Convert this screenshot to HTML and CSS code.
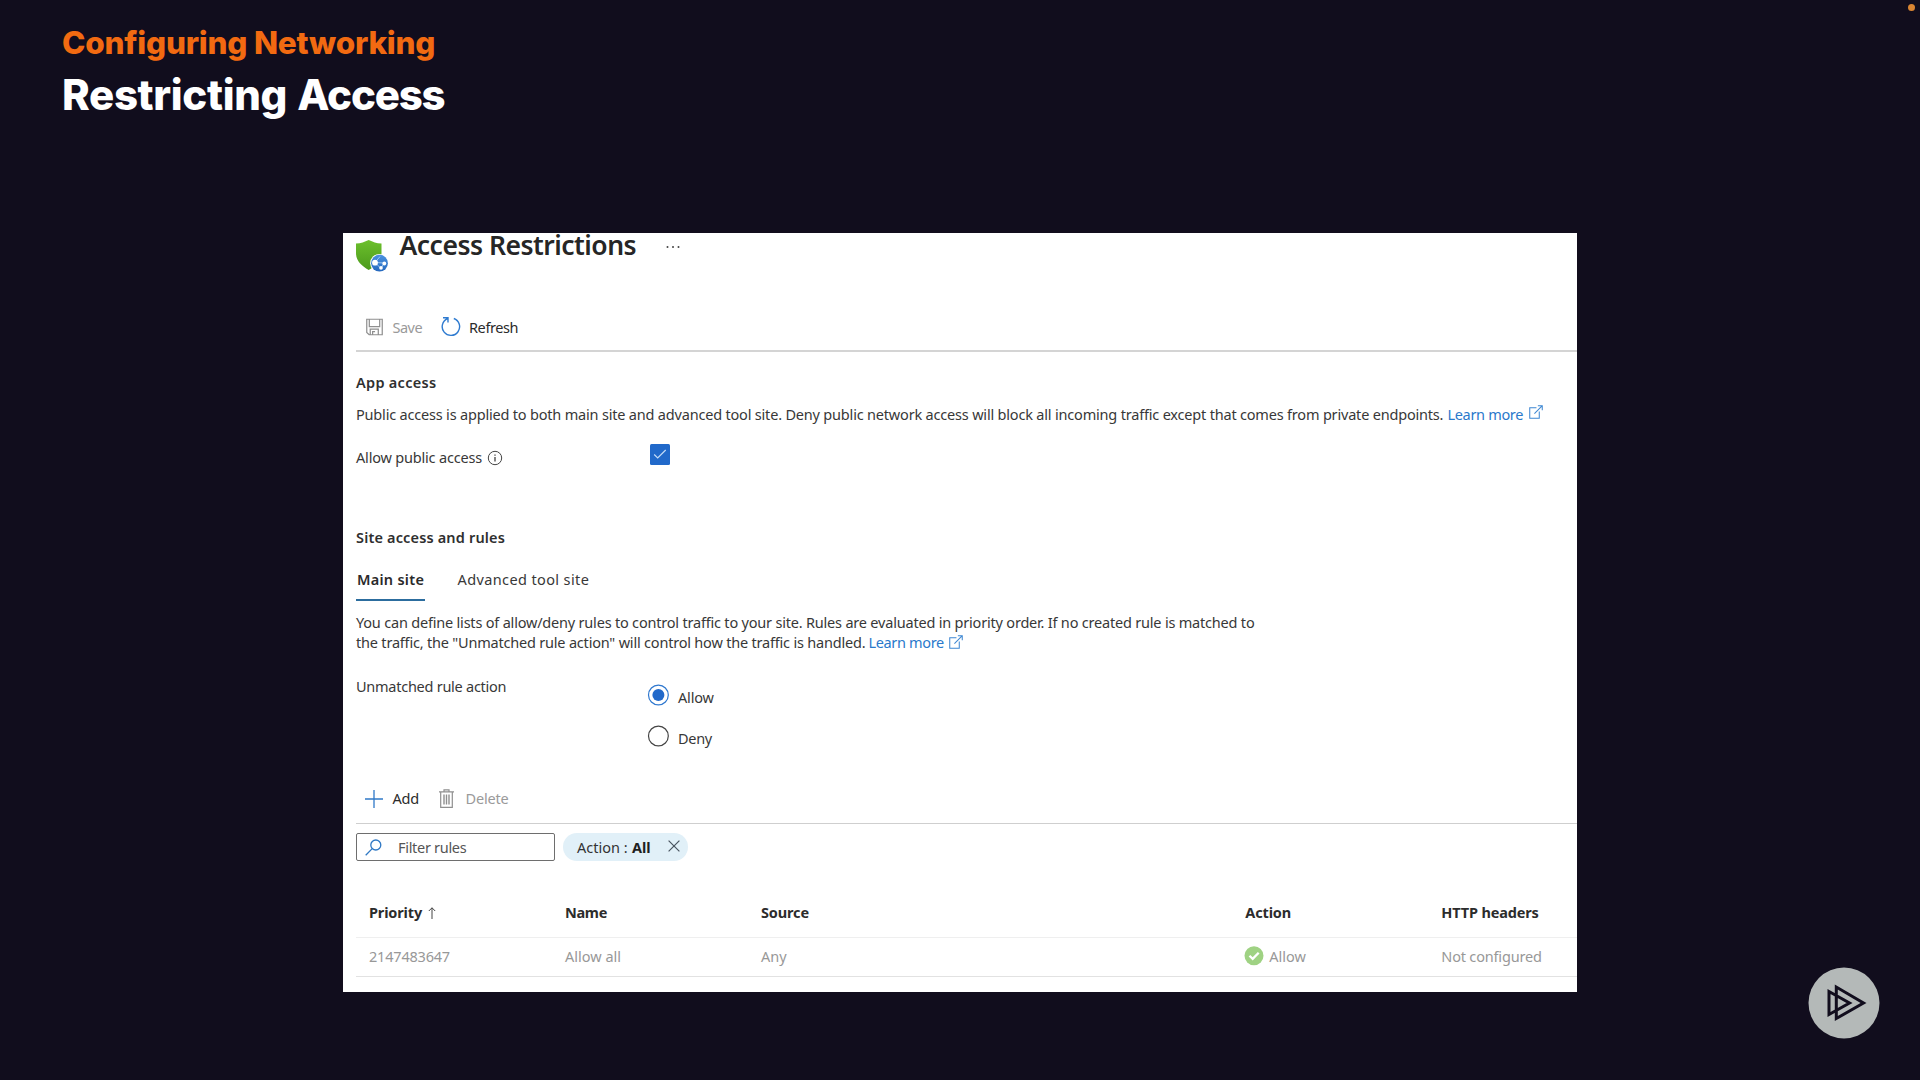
FILE: index.html
```html
<!DOCTYPE html>
<html lang="en">
<head>
<meta charset="utf-8">
<title>Restricting Access</title>
<link rel="stylesheet" href="styles.css">
</head>
<body>
<header class="slide-head">
  <p class="topic">Configuring Networking</p>
  <h1 class="slide-title">Restricting <span class="tight">Access</span></h1>
</header>
<span class="record-dot"></span>

<main class="panel">
  <div class="blade-head">
    <svg class="shield" width="34" height="34" viewBox="0 0 34 34">
      <defs>
        <linearGradient id="g" x1="0" y1="0" x2="0" y2="1"><stop offset="0" stop-color="#6cc02c"/><stop offset="1" stop-color="#4c9a1c"/></linearGradient>
        <linearGradient id="b" x1="0" y1="0" x2="0" y2="1"><stop offset="0" stop-color="#4b92e0"/><stop offset="1" stop-color="#2468bd"/></linearGradient>
      </defs>
      <path fill="url(#g)" d="M0 4.500C5 4.300 8.500 3 12.700 1c4.200 2 7.700 3.300 12.800 3.500V14c0 8-5.500 12.500-12.800 17C5.500 26.500 0 22 0 14z"/>
      <circle cx="23.500" cy="24.200" r="9.300" fill="#fff"/>
      <circle cx="23.500" cy="24.200" r="8.400" fill="url(#b)"/>
      <path d="M19 23.500l9 .5M19 23.500l6 6M28 24l-3 5.500M19 23.500l5-6" stroke="#9cc6f2" stroke-width="1"/>
      <circle cx="19" cy="23.700" r="2.900" fill="#fff"/><circle cx="28.300" cy="24.500" r="1.900" fill="#fff"/><circle cx="25" cy="28.900" r="1.800" fill="#fff"/>
    </svg>
    <h2 class="blade-title">Access Restrictions</h2>
    <svg class="more" width="14" height="4" viewBox="0 0 14 4" fill="#444"><circle cx="1.500" cy="2" r="1"/><circle cx="7" cy="2" r="1"/><circle cx="12.500" cy="2" r="1"/></svg>
  </div>

  <div class="toolbar">
    <svg class="i-save" width="17" height="18" viewBox="0 0 18 18" fill="none" stroke="#8f8f8f" stroke-width="1.300"><path d="M.8.8h16.400v16.400H3.300L.8 14.700zM3.500.8v7.700h11V.8M4.500 17v-5.700h8.500V17M7 17v-3h2.600"/></svg>
    <span class="muted t-save">Save</span>
    <svg class="i-refresh" width="20" height="21" viewBox="0 0 20 21" fill="none" stroke="#2f7bd0" stroke-width="1.400"><path d="M12.800 2.500A8.700 8.700 0 1 1 6.500 2.700M2 1.700h5v4.800"/></svg>
    <span class="strong t-refresh">Refresh</span>
  </div>

  <section class="app-access">
    <h3 class="section-title">App access</h3>
    <p class="intro"><span>Public access is applied to both main site and advanced tool site. Deny public network access will block all incoming traffic except that comes from private endpoints.</span><a class="link">Learn more</a><svg class="ext" width="14" height="14" viewBox="0 0 15 15" fill="none" stroke="#3c86d2" stroke-width="1.100"><path d="M8 3H.8v11.200H11V7M5.800 9.200L14 1M9.500.8h4.700v4.700"/></svg></p>
    <div class="public">
      <span class="public-label">Allow public access</span>
      <svg class="info" width="16" height="16" viewBox="0 0 16 16"><circle cx="8" cy="8" r="6.700" fill="none" stroke="#444" stroke-width="1"/><path d="M8 7v4.500M8 4.500v1.300" stroke="#333" stroke-width="1.200"/></svg>
      <svg class="check" width="20" height="21" viewBox="0 0 20 21"><rect width="20" height="21" rx="1.500" fill="#2169ca"/><path d="M4.200 10.500l3.500 3.500 8-8" fill="none" stroke="#c4dcf7" stroke-width="1.200"/></svg>
    </div>
  </section>

  <section class="site-access">
    <h3 class="section-title">Site access and rules</h3>
    <nav class="tabs"><span class="tab active">Main site</span><span class="tab">Advanced tool site</span></nav>
    <p class="desc">You can define lists of allow/deny rules to control traffic to your site. Rules are evaluated in priority order. If no created rule is matched to<br>the traffic, the "Unmatched rule action" will control how the traffic is handled.<a class="link">Learn more</a><svg class="ext" width="14" height="14" viewBox="0 0 15 15" fill="none" stroke="#3c86d2" stroke-width="1.100"><path d="M8 3H.8v11.200H11V7M5.800 9.200L14 1M9.500.8h4.700v4.700"/></svg></p>
    <div class="unmatched">
      <span class="unmatched-label">Unmatched rule action</span>
      <div class="radios">
        <div class="radio"><svg width="22" height="22" viewBox="0 0 22 22"><circle cx="11.400" cy="11" r="9.900" fill="none" stroke="#2f78cf" stroke-width="1.200"/><circle cx="11.400" cy="11" r="6" fill="#2169ca"/></svg><span>Allow</span></div>
        <div class="radio"><svg width="22" height="22" viewBox="0 0 22 22"><circle cx="11.400" cy="11" r="9.900" fill="none" stroke="#444" stroke-width="1.200"/></svg><span class="t-deny">Deny</span></div>
      </div>
    </div>
  </section>

  <div class="rulebar">
    <svg class="i-add" width="18" height="18" viewBox="0 0 18 18"><path d="M9 0v18M0 9h18" stroke="#3079c8" stroke-width="1.300"/></svg>
    <span class="strong t-add">Add</span>
    <svg class="i-trash" width="15" height="19" viewBox="0 0 15 19" fill="none" stroke="#8f8f8f" stroke-width="1.200"><path d="M0 2.800h15M5 2.500V.8h5v1.700M1.700 3v15.300h11.600V3"/><path d="M5 5.500v10M7.500 5.500v10M10 5.500v10" stroke-width="1.400"/></svg>
    <span class="muted t-delete">Delete</span>
  </div>

  <div class="filters">
    <div class="search">
      <svg width="17" height="17" viewBox="0 0 17 17" fill="none" stroke="#2f78c4" stroke-width="1.300"><circle cx="10.800" cy="6" r="5"/><path d="M7.200 9.600L.7 16.200"/></svg>
      <span class="t-filter">Filter rules</span>
    </div>
    <div class="pill"><span class="pill-key">Action :</span><b>All</b><svg width="12" height="12" viewBox="0 0 12 12"><path d="M.6.6l10.800 10.800M11.400.6L.6 11.400" stroke="#4a5560" stroke-width="1.200"/></svg></div>
  </div>

  <div class="grid grid-head">
    <span class="th-priority">Priority<svg width="8" height="12" viewBox="0 0 8 12" fill="none" stroke="#444" stroke-width="1"><path d="M4 12V.8M.8 4L4 .8 7.200 4"/></svg></span><span class="th-name">Name</span><span>Source</span><span>Action</span><span>HTTP headers</span>
  </div>
  <div class="grid grid-row">
    <span class="digits">2147483647</span><span>Allow all</span><span>Any</span>
    <span class="status"><svg width="20" height="20" viewBox="0 0 20 20"><circle cx="10" cy="9.700" r="9.500" fill="#9fd283"/><path d="M5.500 9.700l3.200 3.200 6-6.200" fill="none" stroke="#fff" stroke-width="2.300"/></svg>Allow</span>
    <span class="headers">Not configured</span>
  </div>
</main>

<svg class="brand" width="72" height="72" viewBox="0 0 72 72">
  <circle cx="36" cy="36" r="35.500" fill="#b4b9b8"/>
  <path d="M21 24.500v23L41.500 36zM28.300 20v31.500L55.500 36z" fill="none" stroke="#110d1d" stroke-width="3"/>
</svg>
</body>
</html>
```

FILE: styles.css
```css
* { box-sizing: border-box; }
body {
  margin: 0;
  width: 1920px;
  height: 1080px;
  overflow: hidden;
  background: #110d1d;
  color: #383838;
  font: 14.5px/20px "Noto Sans", "Open Sans", sans-serif;
  letter-spacing: -0.19px;
}
p, h1, h2, h3 { margin: 0; font-size: inherit; font-weight: inherit; }
svg { display: block; flex: none; }

.slide-head {
  height: 233px;
  padding: 23px 0 0 62px;
  font-family: Inter, "Liberation Sans", sans-serif;
  white-space: nowrap;
}
.topic {
  font-size: 31.5px;
  line-height: 40px;
  font-weight: 800;
  letter-spacing: -0.22px;
  color: #f26a11;
}
.slide-title {
  margin-top: 6px;
  font-size: 42px;
  line-height: 52px;
  font-weight: 800;
  letter-spacing: -0.35px;
  word-spacing: 1.5px;
  color: #fff;
}
.tight { letter-spacing: -1.2px; }
.record-dot {
  position: absolute;
  left: 1908px;
  top: 4px;
  width: 7px;
  height: 7px;
  border-radius: 50%;
  background: #d98532;
}

.panel {
  width: 1234px;
  height: 759px;
  margin-left: 343px;
  padding-left: 13px;
  background: #fff;
  white-space: nowrap;
}

.blade-head { display: flex; height: 84px; }
.shield { margin-top: 6px; }
.blade-title {
  width: 237px;
  margin: 0 0 0 9.500px;
  font-size: 26.5px;
  line-height: 24px;
  font-weight: 600;
  letter-spacing: -0.5px;
  color: #262626;
}
.more { margin: 12px 0 0 29.500px; }

.toolbar, .rulebar { display: flex; }
.toolbar { height: 35px; border-bottom: 2px solid #d4d4d4; }
.muted { color: #9a9a9a; }
.strong { color: #2b2b2b; }
.i-save { margin: 1px 10px 0 9.500px; }
.t-save { width: 30px; letter-spacing: -0.5px; }
.i-refresh { margin: -1px 8.500px 0 18px; }
.t-refresh { letter-spacing: -0.4px; }

.app-access { height: 175px; padding-top: 20px; }
.section-title { font-weight: 600; letter-spacing: 0.29px; color: #2f2f2f; }
.intro { display: flex; margin-top: 12px; }
.intro > span { width: 1091.500px; }
.link { color: #2a79cb; letter-spacing: -0.33px; }
.ext { margin: 1px 0 0 6px; }
.public { display: flex; margin-top: 23px; }
.public-label { width: 131px; }
.info { margin: 3px 0 0 0; }
.check { margin: -3px 0 0 147px; }

.site-access { height: 261px; }
.site-access .section-title { letter-spacing: 0.16px; }
.tabs { display: flex; gap: 31.500px; margin-top: 22px; }
.tab { height: 32px; padding-left: 1px; letter-spacing: 0.38px; }
.tab.active {
  width: 69px;
  border-bottom: 2px solid #2c6d9e;
  font-weight: 600;
  letter-spacing: 0.27px;
  color: #2a2a2a;
}
.desc { margin-top: 12px; line-height: 19.7px; letter-spacing: -0.2px; }
.desc .link { margin-left: 3px; }
.desc .ext { display: inline-block; margin-left: 5px; vertical-align: -1px; }
.unmatched { display: flex; margin-top: 24px; }
.unmatched-label { width: 291px; letter-spacing: -0.26px; }
.radios { display: flex; flex-direction: column; gap: 21px; padding-top: 11px; }
.radio { display: flex; height: 20px; gap: 9px; }
.radio svg { margin-top: -3px; }
.t-deny { letter-spacing: -0.3px; }

.rulebar { height: 36px; border-bottom: 1px solid #cfcfcf; color: #333; }
.i-add { margin: 2px 9.500px 0 9px; }
.t-add { width: 27px; }
.i-trash { margin: 1px 11.500px 0 19.500px; }

.filters { display: flex; gap: 8px; margin-top: 9px; }
.search {
  display: flex;
  width: 199px;
  height: 28px;
  padding: 3px 0 0 8px;
  border: 1px solid #6e6e6e;
  border-radius: 2px;
  gap: 16px;
  color: #555;
}
.search svg { margin-top: 2px; }
.t-filter { letter-spacing: -0.3px; }
.pill {
  display: flex;
  width: 125px;
  height: 28px;
  padding: 4px 0 0 14px;
  border-radius: 14px;
  background: #e1f0f8;
  letter-spacing: 0;
  color: #333;
}
.pill-key { width: 55px; }
.pill b { width: 36px; color: #1f1f1f; }
.pill svg { margin-top: 3px; }

.grid {
  display: grid;
  grid-template-columns: 196px 196px 484.300px 196px 1fr;
  padding-left: 13px;
}
.grid-head {
  height: 77px;
  padding-top: 41px;
  border-bottom: 1px solid #efefef;
  font-weight: 700;
  letter-spacing: -0.15px;
  color: #2c2c2c;
}
.th-priority { display: flex; gap: 6px; }
.th-priority svg { margin-top: 5px; }
.th-name { letter-spacing: -0.3px; }
.grid-row {
  height: 39px;
  padding-top: 8px;
  border-bottom: 1px solid #e2e2e2;
  letter-spacing: 0;
  color: #989898;
}
.digits { letter-spacing: -0.2px; }
.status { display: flex; gap: 5px; }
.status svg { margin: 0 0 0 -1px; }
.headers { letter-spacing: -0.18px; }

.brand { position: absolute; left: 1808px; top: 967px; }
```
